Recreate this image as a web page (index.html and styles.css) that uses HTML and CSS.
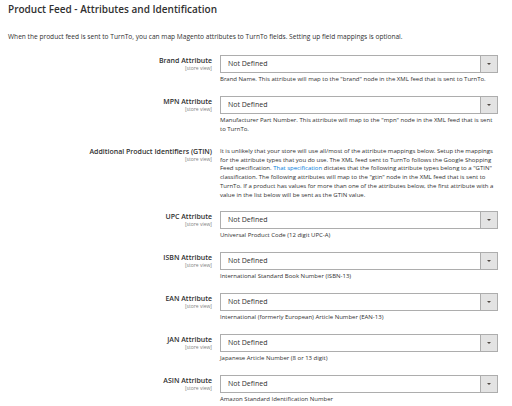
FILE: index.html
```html
<!DOCTYPE html>
<html>
<head>
<meta charset="utf-8">
<link rel="stylesheet" href="styles.css">
</head>
<body>
<div class="page">
  <h1 class="title">Product Feed - Attributes and Identification</h1>
  <p class="intro">When the product feed is sent to TurnTo, you can map Magento attributes to TurnTo fields. Setting up field mappings is optional.</p>

  <div class="field">
    <div class="label"><span class="name">Brand Attribute</span><span class="scope">[store view]</span></div>
    <div class="control">
      <div class="select"><span class="value">Not Defined</span><span class="btn"><span class="arrow"></span></span></div>
      <div class="note">Brand Name. This attribute will map to the "brand" node in the XML feed that is sent to TurnTo.</div>
    </div>
  </div>

  <div class="field">
    <div class="label"><span class="name">MPN Attribute</span><span class="scope">[store view]</span></div>
    <div class="control">
      <div class="select"><span class="value">Not Defined</span><span class="btn"><span class="arrow"></span></span></div>
      <div class="note">Manufacturer Part Number. This attribute will map to the "mpn" node in the XML feed that is sent to TurnTo.</div>
    </div>
  </div>

  <div class="field gtin">
    <div class="label"><span class="name">Additional Product Identifiers (GTIN)</span><span class="scope">[store view]</span></div>
    <div class="control">
      <div class="desc">It is unlikely that your store will use all/most of the attribute mappings below. Setup the mappings for the attribute types that you do use. The XML feed sent to TurnTo follows the Google Shopping Feed specification. <span class="link">That specification</span> dictates that the following attribute types belong to a "GTIN" classification. The following attributes will map to the "gtin" node in the XML feed that is sent to TurnTo. If a product has values for more than one of the attributes below, the first attribute with a value in the list below will be sent as the GTIN value.</div>
    </div>
  </div>

  <div class="field">
    <div class="label"><span class="name">UPC Attribute</span><span class="scope">[store view]</span></div>
    <div class="control">
      <div class="select"><span class="value">Not Defined</span><span class="btn"><span class="arrow"></span></span></div>
      <div class="note">Universal Product Code (12 digit UPC-A)</div>
    </div>
  </div>

  <div class="field">
    <div class="label"><span class="name">ISBN Attribute</span><span class="scope">[store view]</span></div>
    <div class="control">
      <div class="select"><span class="value">Not Defined</span><span class="btn"><span class="arrow"></span></span></div>
      <div class="note">International Standard Book Number (ISBN-13)</div>
    </div>
  </div>

  <div class="field">
    <div class="label"><span class="name">EAN Attribute</span><span class="scope">[store view]</span></div>
    <div class="control">
      <div class="select"><span class="value">Not Defined</span><span class="btn"><span class="arrow"></span></span></div>
      <div class="note">International (formerly European) Article Number (EAN-13)</div>
    </div>
  </div>

  <div class="field">
    <div class="label"><span class="name">JAN Attribute</span><span class="scope">[store view]</span></div>
    <div class="control">
      <div class="select"><span class="value">Not Defined</span><span class="btn"><span class="arrow"></span></span></div>
      <div class="note">Japanese Article Number (8 or 13 digit)</div>
    </div>
  </div>

  <div class="field">
    <div class="label"><span class="name">ASIN Attribute</span><span class="scope">[store view]</span></div>
    <div class="control">
      <div class="select"><span class="value">Not Defined</span><span class="btn"><span class="arrow"></span></span></div>
      <div class="note">Amazon Standard Identification Number</div>
    </div>
  </div>
</div>
</body>
</html>
```
FILE: styles.css
```css
html, body {
  margin: 0;
  padding: 0;
  background: #ffffff;
}
body {
  font-family: "Open Sans", "DejaVu Sans", sans-serif;
  color: #303030;
  overflow: hidden;
}
.page {
  padding: 3px 14px 0 8px;
}
.title {
  margin: 0;
  font-size: 10px;
  line-height: 13px;
  font-weight: 600;
  color: #303030;
}
.intro {
  margin: 16px 0 14px;
  font-size: 6.6px;
  line-height: 9px;
}
.field {
  display: grid;
  grid-template-columns: 204px 278px;
  column-gap: 8px;
  margin-bottom: 12px;
}
.label {
  display: flex;
  flex-direction: column;
  align-items: flex-end;
  text-align: right;
  padding-top: 1px;
}
.name {
  font-size: 7px;
  line-height: 9px;
  font-weight: 600;
  color: #303030;
}
.scope {
  font-size: 5px;
  line-height: 6px;
  color: #808080;
}
.select {
  display: flex;
  height: 18px;
  box-sizing: border-box;
  border: 1px solid #adadad;
  background: #fff;
}
.value {
  flex: 1;
  font-size: 7px;
  line-height: 16px;
  padding-left: 7px;
}
.btn {
  width: 16px;
  background: #e3e3e3;
  border-left: 1px solid #adadad;
  display: flex;
  align-items: center;
  justify-content: center;
}
.arrow {
  width: 0;
  height: 0;
  border-left: 2px solid transparent;
  border-right: 2px solid transparent;
  border-top: 2px solid #514943;
}
.note {
  margin-top: 2px;
  font-size: 6px;
  line-height: 9px;
}
.gtin {
  margin-top: 2px;
}
.desc {
  font-size: 6px;
  line-height: 8.7px;
  margin-top: 1px;
}
.link {
  color: #007bdb;
}
```
